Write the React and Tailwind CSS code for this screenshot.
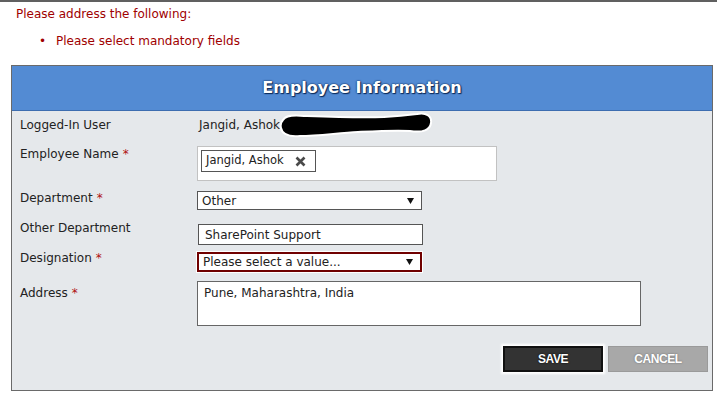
import React from "react";

const Arrow = () => (
  <svg width="7" height="6" viewBox="0 0 7 6" className="shrink-0">
    <path d="M0 0H7L3.5 6Z" fill="#111" />
  </svg>
);

const Star = () => <span className="text-[#b01010] ml-[4px]">*</span>;

function Row({ label, star, labelMt, mt, children }) {
  return (
    <div className="flex items-start" style={{ marginTop: mt }}>
      <div className="w-[185px] pl-[8px] leading-[16px] shrink-0" style={{ marginTop: labelMt }}>
        {label}
        {star && <Star />}
      </div>
      {children}
    </div>
  );
}

export default function App() {
  return (
    <div
      className="w-[717px] h-[396px] bg-white text-[12px] text-[#222] overflow-hidden border-t-2 border-[#606060]"
      style={{ fontFamily: '"DejaVu Sans", sans-serif' }}
    >
      <div className="text-[#a00000] leading-[16px]">
        <div className="pl-[16px] pt-[4px]">Please address the following:</div>
        <div className="flex pl-[39px] mt-[11px]">
          <span className="w-[17px]">•</span>
          <span>Please select mandatory fields</span>
        </div>
      </div>

      <div className="ml-[11px] mt-[16px] w-[702px] border border-[#6a6a6a] bg-[#e5e8eb]">
        <div className="h-[45px] bg-[#538bd3] border-b border-[#3d6db0] flex items-center justify-center">
          <span className="text-white font-bold text-[16px] [text-shadow:0_0_2px_#0b2a5a,1px_1px_1px_#0b2a5a,0_0_1px_#0b2a5a]">
            Employee Information
          </span>
        </div>

        <div className="pb-[18px]">
          <Row label="Logged-In User" mt={6} labelMt={0}>
            <div className="flex items-center h-[16px] ml-[2px]">
              <span className="leading-[16px]">Jangid, Ashok</span>
              <svg width="156" height="26" viewBox="0 0 156 26" className="shrink-0 -ml-[2px]">
                <path
                  d="M5 8 C8 3 16 3 26 4 C55 5 82 6 106 5 C120 4 130 3 139 2 C148 0 154 4 153 11 C152 18 145 21 132 19 C118 18 100 19 80 20 C60 21 40 24 22 24 C11 25 4 22 3 16 C2 12 3 10 5 8 Z"
                  fill="#000"
                  stroke="#fff"
                  strokeWidth="2"
                />
              </svg>
            </div>
          </Row>

          <Row label="Employee Name" star mt={13} labelMt={0}>
            <div className="w-[300px] h-[35px] bg-white border border-[#c2c2c2] px-[3px] pt-[3px]">
              <div className="inline-flex items-center h-[22px] border border-[#555] bg-white pl-[4px] pr-[9px] text-[11.5px]">
                <span>Jangid, Ashok</span>
                <svg width="11" height="11" viewBox="0 0 11 11" className="ml-[11px] mt-[1px]">
                  <path d="M1.5 1.5L9.5 9.5M9.5 1.5L1.5 9.5" stroke="#4a4a4a" strokeWidth="2.6" />
                </svg>
              </div>
            </div>
          </Row>

          <Row label="Department" star mt={10} labelMt={-1}>
            <div className="w-[225px] h-[19px] bg-white border border-[#555] flex items-center justify-between pl-[4px] pr-[7px]">
              <span>Other</span>
              <Arrow />
            </div>
          </Row>

          <Row label="Other Department" mt={14} labelMt={-4}>
            <div className="ml-[1px] w-[225px] h-[21px] bg-white border border-[#555] flex items-center pl-[6px]">
              <span>SharePoint Support</span>
            </div>
          </Row>

          <Row label="Designation" star mt={7} labelMt={-2}>
            <div className="w-[225px] h-[20px] bg-white border-2 border-[#700000] shadow-[0_0_0_1px_#ffffff] flex items-center justify-between pl-[4px] pr-[7px]">
              <span>Please select a value...</span>
              <Arrow />
            </div>
          </Row>

          <Row label="Address" star mt={9} labelMt={4}>
            <div className="w-[444px] h-[45px] bg-white border border-[#666] pl-[6px] pt-[3px] leading-[16px]">
              Pune, Maharashtra, India
            </div>
          </Row>

          <div
            className="flex justify-end gap-[5px] mt-[20px] pr-[4px]"
            style={{ fontFamily: '"Liberation Sans", Arial, sans-serif' }}
          >
            <button className="w-[100px] h-[26px] bg-[#333] border-2 border-[#111] shadow-[0_0_2px_2px_#ffffff] text-white font-bold text-[12px] tracking-[-0.4px] [text-shadow:0_0_2px_#000]">
              SAVE
            </button>
            <button className="w-[100px] h-[26px] bg-[#a8a8a8] border border-[#9a9a9a] text-white font-bold text-[12px] tracking-[-0.4px] [text-shadow:0_0_2px_#666]">
              CANCEL
            </button>
          </div>
        </div>
      </div>
    </div>
  );
}
